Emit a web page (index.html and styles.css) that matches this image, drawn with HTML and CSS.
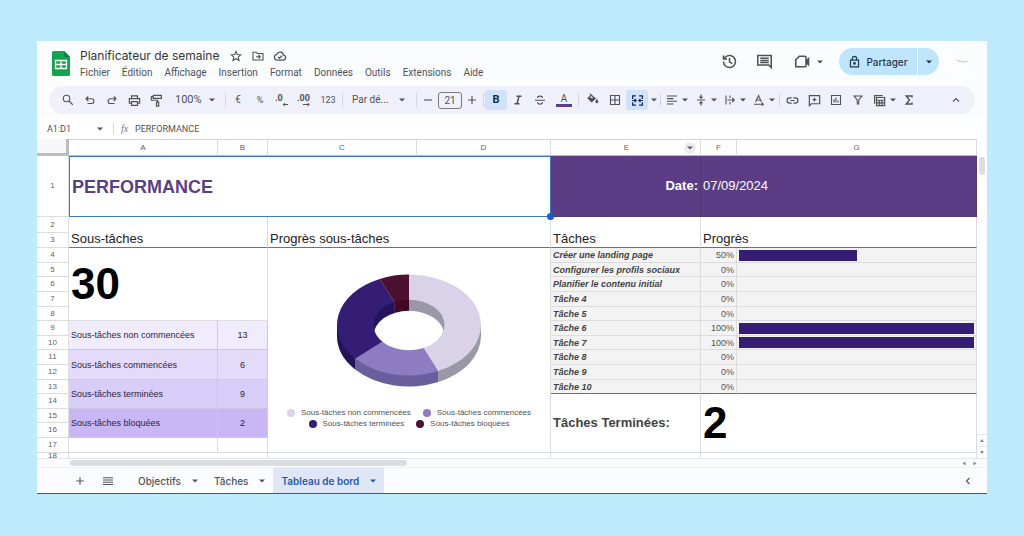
FILE: index.html
```html
<!DOCTYPE html>
<html lang="fr">
<head>
<meta charset="utf-8">
<title>Planificateur de semaine</title>
<link rel="stylesheet" href="styles.css">
</head>
<body>
<svg class="defs" aria-hidden="true">
  <symbol id="caret" viewBox="0 0 6 4"><path d="M0 .5h6L3 3.6z" fill="currentColor"/></symbol>
</svg>
<div class="window">
  <header class="top">
    <svg class="logo" viewBox="0 0 18 25" aria-hidden="true">
      <path d="M1.500 0H12l6 6v17.500a1.500 1.500 0 0 1-1.500 1.500h-15A1.500 1.500 0 0 1 0 23.500v-22A1.500 1.500 0 0 1 1.500 0z" fill="#12a550"/>
      <path d="M12 0l6 6h-4.500A1.500 1.500 0 0 1 12 4.500z" fill="#0a8040"/>
      <path d="M3.500 9.500h11v8h-11zM9 9.500v8M3.500 13.500h11" fill="none" stroke="#fff" stroke-width="1.300"/>
    </svg>
    <div class="doc">
      <div class="doc-title">
        <h1>Planificateur de semaine</h1>
        <button aria-label="Suivre"><svg class="i12" viewBox="0 0 24 24"><path d="M12 3l2.700 6.200 6.800.6-5.100 4.500 1.500 6.600-5.900-3.500-5.900 3.500 1.500-6.600-5.100-4.500 6.800-.6z"/></svg></button>
        <button aria-label="Déplacer"><svg class="i12" viewBox="0 0 24 24"><path d="M2 4.500h7l2 2.500h11v13H2zM8 13.500h8M13 10l3.500 3.500L13 17"/></svg></button>
        <button aria-label="État du document"><svg class="i14" viewBox="0 0 24 24"><path d="M7 19a5 5 0 0 1-.5-9.900A6 6 0 0 1 18 10.500 4.300 4.300 0 0 1 18 19zM8.500 13.500l2.500 2.500 4.500-4.500"/></svg></button>
      </div>
      <nav class="menus">
        <button>Fichier</button><button>Édition</button><button>Affichage</button><button>Insertion</button><button>Format</button><button>Données</button><button>Outils</button><button>Extensions</button><button>Aide</button>
      </nav>
    </div>
    <div class="actions">
      <button aria-label="Historique"><svg class="i17" viewBox="0 0 24 24"><path d="M3.500 12a8.500 8.500 0 1 0 2.800-6.300L3.500 8.300M3.500 3.500v5h5M12 7v5.500l4 2.500"/></svg></button>
      <button aria-label="Commentaires"><svg class="i17" viewBox="0 0 24 24"><path d="M2.500 3.500h19v17l-3.500-3.500H2.500zM6 7.500h12M6 10.500h12M6 13.500h12"/></svg></button>
      <button class="meet" aria-label="Appel"><svg class="i17" viewBox="0 0 24 24"><path d="M7.500 4.500H15a2 2 0 0 1 2 2v11a2 2 0 0 1-2 2H2.500V9.500z"/><path d="M17.500 11l3-3v8.500l-3-3z" fill="currentColor"/></svg><svg class="caret"><use href="#caret"/></svg></button>
      <div class="share">
        <button class="share-main"><svg class="i13" viewBox="0 0 24 24"><path d="M4.500 9.500h15V22h-15zM8 9.500V6.500a4 4 0 0 1 8 0v3"/><circle cx="12" cy="15.500" r="1.500"/></svg>Partager</button>
        <button class="share-more" aria-label="Options de partage"><svg class="caret"><use href="#caret"/></svg></button>
      </div>
      <button class="avatar" aria-label="Compte"><svg class="i13" viewBox="0 0 24 24"><path d="M2 9l5 3 3-1 3 3 4-2h5" /></svg></button>
    </div>
  </header>

  <div class="toolbar" role="toolbar">
    <button aria-label="Rechercher"><svg class="i12" viewBox="0 0 24 24"><circle cx="9" cy="9" r="6.500"/><path d="M14 14l7.500 7.500"/></svg></button>
    <button aria-label="Annuler"><svg class="i12" viewBox="0 0 24 24"><path d="M8.500 5L4 9.500 8.500 14M4.500 9.500H15a4.800 4.800 0 0 1 0 9.600H7"/></svg></button>
    <button aria-label="Rétablir"><svg class="i12" viewBox="0 0 24 24"><path d="M15.500 5L20 9.500 15.500 14M19.500 9.500H9a4.800 4.800 0 0 0 0 9.600h8"/></svg></button>
    <button aria-label="Imprimer"><svg class="i13" viewBox="0 0 24 24"><path d="M6.500 8V3.500h11V8M6.500 17H2.500V8.500h19V17h-4M6.500 14h11v7h-11z"/></svg></button>
    <button aria-label="Reproduire la mise en forme"><svg class="i13" viewBox="0 0 24 24"><path d="M6 2.500h15V8H6zM6 5H2.500v6.500H14V15M12 15h4v7.500h-4z"/></svg></button>
    <label class="pick zoom"><select aria-label="Zoom"><option>100%</option></select><svg class="caret"><use href="#caret"/></svg></label>
    <span class="sep"></span>
    <button aria-label="Format monétaire">€</button>
    <button aria-label="Pourcentage" class="small">%</button>
    <button aria-label="Réduire les décimales" class="dec"><svg class="i14" viewBox="0 0 14 14"><text x="0" y="8">.0</text><path d="M13 11.500H8M10 9.800L8.300 11.500l1.700 1.700" stroke-width="1"/></svg></button>
    <button aria-label="Ajouter des décimales" class="dec"><svg class="i14" viewBox="0 0 14 14"><text x="0" y="8">.00</text><path d="M6 11.500h6M10.500 9.800l1.700 1.700-1.700 1.700" stroke-width="1"/></svg></button>
    <button class="w26 small">123</button>
    <span class="sep"></span>
    <label class="pick font"><select aria-label="Police"><option>Par dé...</option></select><svg class="caret"><use href="#caret"/></svg></label>
    <span class="sep"></span>
    <button class="w20" aria-label="Réduire la taille"><svg class="i12" viewBox="0 0 24 24"><path d="M4 12h16"/></svg></button>
    <input class="size" aria-label="Taille de police" value="21">
    <button class="w20" aria-label="Augmenter la taille"><svg class="i12" viewBox="0 0 24 24"><path d="M4 12h16M12 4v16"/></svg></button>
    <span class="sep"></span>
    <button class="on bold" aria-label="Gras">B</button>
    <button aria-label="Italique"><svg class="i12" viewBox="0 0 24 24"><path d="M9 4.500h10M5 19.500h10M14 4.500l-4 15" stroke-width="3"/></svg></button>
    <button aria-label="Barré"><svg class="i12" viewBox="0 0 24 24"><path d="M2 12.500h20M17 8c-.5-5-10-5-10 0M7 16.500c.5 5 10 5 10 0"/></svg></button>
    <button class="w26" aria-label="Couleur du texte"><span class="text-color">A</span></button>
    <span class="sep"></span>
    <button class="w24 fill" aria-label="Couleur de remplissage"><svg class="i13" viewBox="0 0 24 24"><path d="M7 3l9.500 9-6 6L4 11.500l6-6"/><path d="M5 11.500h11l-5.500 6z" fill="currentColor"/><path d="M20 14.500c3 4 1 5 0 5s-3-1 0-5z" fill="currentColor"/></svg></button>
    <button aria-label="Bordures"><svg class="i12" viewBox="0 0 24 24"><path d="M3 3h18v18H3zM12 3v18M3 12h18"/></svg></button>
    <button class="on" aria-label="Fusionner"><svg class="i13" viewBox="0 0 24 24"><path d="M9 3.500H3V9M3 15v5.500h6M15 3.500h6V9M21 15v5.500h-6M2 12h7M6.500 9l3 3-3 3M22 12h-7M17.500 9l-3 3 3 3"/></svg></button>
    <button class="w11" aria-label="Options de fusion"><svg class="caret"><use href="#caret"/></svg></button>
    <span class="sep"></span>
    <button class="drop" aria-label="Alignement horizontal"><svg class="i12" viewBox="0 0 24 24"><path d="M2 4h20M2 9.300h13M2 14.600h20M2 20h13"/></svg><svg class="caret"><use href="#caret"/></svg></button>
    <button class="drop" aria-label="Alignement vertical"><svg class="i12" viewBox="0 0 24 24"><path d="M4 12h16M12 1v7M9 5.500l3 3 3-3M12 23v-7M9 18.500l3-3 3 3"/></svg><svg class="caret"><use href="#caret"/></svg></button>
    <button class="drop" aria-label="Retour à la ligne"><svg class="i12" viewBox="0 0 24 24"><path d="M4 3v18M12 3v5M12 16v5M7 12h13M16.500 8l4 4-4 4"/></svg><svg class="caret"><use href="#caret"/></svg></button>
    <button class="drop" aria-label="Rotation du texte"><svg class="i12" viewBox="0 0 24 24"><path d="M5 16l6-13 6 13M7.500 12h7M2 20.500h18M17.500 17.500l3 3-3 3"/></svg><svg class="caret"><use href="#caret"/></svg></button>
    <span class="sep"></span>
    <button aria-label="Lien"><svg class="i13" viewBox="0 0 24 24"><path d="M10.500 7H7a5 5 0 0 0 0 10h3.500M13.500 7H17a5 5 0 0 1 0 10h-3.500M8 12h8"/></svg></button>
    <button aria-label="Commentaire"><svg class="i13" viewBox="0 0 24 24"><path d="M2.500 3h19v15H6l-3.500 3.500zM12 7v7M8.500 10.500h7"/></svg></button>
    <button aria-label="Graphique"><svg class="i12" viewBox="0 0 24 24"><path d="M3 3h18v18H3zM8 10v7M12 7v10M16 13v4"/></svg></button>
    <button aria-label="Filtre"><svg class="i12" viewBox="0 0 24 24"><path d="M4 4h16l-6.500 8v8h-3v-8z"/></svg></button>
    <button class="drop" aria-label="Vues filtrées"><svg class="i13" viewBox="0 0 24 24"><path d="M6.500 6.500h15v15h-15zM6.500 11.500h15M6.500 16.500h15M11.500 11.500v10M16.500 11.500v10M3 18V3h15"/></svg><svg class="caret"><use href="#caret"/></svg></button>
    <button aria-label="Fonctions"><svg class="i12" viewBox="0 0 24 24"><path d="M18 7V4H6.500l6.500 8-6.500 8H18v-3" stroke-width="3"/></svg></button>
    <button class="last" aria-label="Masquer les menus"><svg class="i12" viewBox="0 0 24 24"><path d="M6 15l6-6 6 6"/></svg></button>
  </div>

  <div class="formula">
    <input class="name" aria-label="Zone de nom" value="A1:D1">
    <svg class="caret"><use href="#caret"/></svg>
    <span class="fx">fx</span>
    <input class="content" aria-label="Contenu de la cellule" value="PERFORMANCE">
  </div>

  <main class="sheet">
    <div class="grid">
    <table>
      <colgroup><col class="c-n"><col class="c-a"><col class="c-b"><col class="c-c"><col class="c-d"><col class="c-e"><col class="c-f"><col></colgroup>
      <thead><tr><th class="corner"></th><th>A</th><th>B</th><th>C</th><th>D</th><th><div class="sorted"><span>E</span><button aria-label="Menu de la colonne E"><svg class="caret"><use href="#caret"/></svg></button></div></th><th>F</th><th>G</th></tr></thead>
      <tbody>
        <tr class="r-title"><th>1</th><td colspan="4" class="selected">PERFORMANCE<span class="handle"></span></td><td class="banner date">Date:</td><td colspan="2" class="banner">07/09/2024</td></tr>
        <tr class="r-gap"><th>2</th><td colspan="2"></td><td colspan="2"></td><td></td><td colspan="2"></td></tr>
        <tr class="r-head"><th>3</th><td colspan="2">Sous-tâches</td><td colspan="2">Progrès sous-tâches</td><td>Tâches</td><td colspan="2">Progrès</td></tr>
        <tr><th>4</th><td colspan="2" rowspan="5" class="big">30</td>
          <td colspan="2" rowspan="14" class="chart">
            <svg class="donut" viewBox="0 0 144 113" role="img" aria-label="Progrès sous-tâches">
              <clipPath id="hole"><ellipse cx="72" cy="51" rx="35.500" ry="25.300"/></clipPath>
              <path d="M144 51v11A72 50.500 0 0 1 101.300 108V97z" fill="#9a97a6"/>
              <path d="M101.300 97v11.100A72 50.500 0 0 1 18.500 95.800V84.800z" fill="#6a5f9b"/>
              <path d="M18.500 84.800v11A72 50.500 0 0 1 0 62V51z" fill="#25135a"/>
              <path d="M72 .5A72 50.500 0 0 1 101.300 97.100L86.400 74.100 72 51z" fill="#d9d2e9"/>
              <path d="M101.300 97.100A72 50.500 0 0 1 18.500 84.800L72 51z" fill="#8e7cc3"/>
              <path d="M18.500 84.800A72 50.500 0 0 1 42.700 4.900L72 51z" fill="#351c75"/>
              <path d="M42.700 4.900A72 50.500 0 0 1 72 .5V51z" fill="#4c1130"/>
              <g clip-path="url(#hole)">
                <path d="M72 20h40v50H72z" fill="#9a97a6"/>
                <path d="M57.600 20H72v50H57.600z" fill="#420a24"/>
                <path d="M30 20h27.600v50H30z" fill="#25135a"/>
                <ellipse cx="72" cy="62" rx="35.500" ry="25.300" fill="#fff"/>
              </g>
              <path d="M42.700 4.900l14.900 23v11" fill="none" stroke="#6b2a5c" stroke-width=".6"/>
            </svg>
            <ul class="legend">
              <li class="k1">Sous-tâches non commencées</li><li class="k2">Sous-tâches commencées</li>
            </ul>
            <ul class="legend">
              <li class="k3">Sous-tâches terminées</li><li class="k4">Sous-tâches bloquées</li>
            </ul>
          </td>
          <td class="task">Créer une landing page</td><td class="pct">50%</td><td class="track"><div class="bar" style="width:50%"></div></td></tr>
        <tr class="s"><th>5</th><td class="task">Configurer les profils sociaux</td><td class="pct">0%</td><td class="track"></td></tr>
        <tr><th>6</th><td class="task">Planifier le contenu initial</td><td class="pct">0%</td><td class="track"></td></tr>
        <tr><th>7</th><td class="task">Tâche 4</td><td class="pct">0%</td><td class="track"></td></tr>
        <tr class="s"><th>8</th><td class="task">Tâche 5</td><td class="pct">0%</td><td class="track"></td></tr>
        <tr><th>9</th><td rowspan="2" class="sub t1">Sous-tâches non commencées</td><td rowspan="2" class="sub num t1">13</td><td class="task">Tâche 6</td><td class="pct">100%</td><td class="track"><div class="bar" style="width:100%"></div></td></tr>
        <tr class="s"><th>10</th><td class="task">Tâche 7</td><td class="pct">100%</td><td class="track"><div class="bar" style="width:100%"></div></td></tr>
        <tr><th>11</th><td rowspan="2" class="sub t2">Sous-tâches commencées</td><td rowspan="2" class="sub num t2">6</td><td class="task">Tâche 8</td><td class="pct">0%</td><td class="track"></td></tr>
        <tr><th>12</th><td class="task">Tâche 9</td><td class="pct">0%</td><td class="track"></td></tr>
        <tr class="s end"><th>13</th><td rowspan="2" class="sub t3">Sous-tâches terminées</td><td rowspan="2" class="sub num t3">9</td><td class="task">Tâche 10</td><td class="pct">0%</td><td class="track"></td></tr>
        <tr><th>14</th><td rowspan="4" class="total">Tâches Terminées:</td><td colspan="2" rowspan="4" class="big">2</td></tr>
        <tr class="s"><th>15</th><td rowspan="2" class="sub t4">Sous-tâches bloquées</td><td rowspan="2" class="sub num t4">2</td></tr>
        <tr><th>16</th></tr>
        <tr><th>17</th><td></td><td></td></tr>
        <tr class="last-row"><th>18</th><td colspan="2"></td><td colspan="2"></td><td></td><td colspan="2"></td></tr>
      </tbody>
    </table>
    </div>
    <div class="vscroll"><span class="thumb"></span><button aria-label="Haut"><i></i></button><button aria-label="Bas"><i class="down"></i></button></div>
  </main>
  <div class="hscroll"><span class="thumb"></span><button aria-label="Gauche"><i class="left"></i></button><button aria-label="Droite"><i class="right"></i></button></div>

  <footer class="tabs">
    <button class="tool" aria-label="Ajouter une feuille"><svg class="i12" viewBox="0 0 24 24"><path d="M4.500 12h15M12 4.500v15"/></svg></button>
    <button class="tool" aria-label="Toutes les feuilles"><svg class="i12" viewBox="0 0 24 24"><path d="M2 5.500h20M2 10h20M2 14.500h20M2 19h20" stroke-width="2"/></svg></button>
    <button class="tab">Objectifs<svg class="caret"><use href="#caret"/></svg></button>
    <button class="tab">Tâches<svg class="caret"><use href="#caret"/></svg></button>
    <button class="tab active">Tableau de bord<svg class="caret"><use href="#caret"/></svg></button>
    <button class="tool side" aria-label="Afficher le panneau"><svg class="i12" viewBox="0 0 24 24"><path d="M15 6l-6 6 6 6"/></svg></button>
  </footer>
</div>
</body>
</html>
```

FILE: styles.css
```css
* { box-sizing: border-box; }

body {
  margin: 0;
  height: 100vh;
  padding: 41px 37px 42px;
  background: #bdebfb;
  color: #505355;
  font: 10px/14px Roboto, "Liberation Sans", sans-serif;
}

button, input, select {
  margin: 0;
  padding: 0;
  border: 0;
  background: none;
  color: inherit;
  font: inherit;
}

button {
  display: flex;
  align-items: center;
  justify-content: center;
  flex: none;
}

svg {
  flex: none;
  fill: none;
  stroke: currentColor;
  stroke-width: 2.2;
}

.defs { position: absolute; width: 0; height: 0; }
.i12 { width: 12px; height: 12px; }
.i13 { width: 13px; height: 13px; }
.i14 { width: 14px; height: 14px; }
.i17 { width: 17px; height: 17px; }
.caret { width: 6px; height: 4px; stroke: none; }

.window {
  display: flex;
  flex-direction: column;
  height: 100%;
  background: #fbfcfe;
  border-bottom: 1px solid #4b5a63;
}

/* Title bar */
.top {
  display: flex;
  flex: none;
  height: 45px;
  padding: 7px 14px 0 15px;
}
.logo { width: 18px; height: 25px; margin-top: 3px; stroke: none; }
.doc { margin-left: 10px; }
.doc-title { display: flex; align-items: center; height: 16px; }
.doc-title h1 {
  margin: 0 11px 0 0;
  color: #35383a;
  font: 12px/16px Inter, sans-serif;
}
.doc-title button { width: 12px; margin-right: 10px; }
.menus { display: flex; gap: 12px; margin-top: 2px; }
.actions {
  display: flex;
  align-items: center;
  height: 27px;
  margin-left: auto;
}
.actions > button { margin-right: 18px; }
.actions .meet { gap: 6px; margin: 0 16px 0 3px; }
.share { display: flex; height: 27px; color: #1f3850; }
.share-main {
  gap: 5px;
  width: 78px;
  border-radius: 14px 0 0 14px;
  background: #bfe5fd;
  font: 500 10px/14px Inter, sans-serif;
}
.share-more {
  width: 21px;
  margin-left: 1px;
  border-radius: 0 14px 14px 0;
  background: #bfe5fd;
}
.actions > .avatar {
  width: 22px;
  height: 22px;
  margin: 0 0 0 12px;
  background: #fdfdfd;
  color: #c9cccb;
}

/* Toolbar */
.toolbar {
  display: flex;
  align-items: center;
  flex: none;
  height: 28px;
  margin: 0 12px;
  padding: 0 8px;
  border-radius: 14px;
  background: #eff0fa;
}
.toolbar button { width: 22px; height: 20px; }
.toolbar .small { font-size: 9px; }
.toolbar .w11 { width: 11px; }
.toolbar .w20 { width: 20px; }
.toolbar .w24 { width: 24px; }
.toolbar .w26 { width: 26px; }
.toolbar .drop { justify-content: flex-start; gap: 4px; width: 29px; padding-left: 4px; }
.toolbar .last { margin-left: auto; }
.toolbar .on { border-radius: 3px; background: #d0e1fb; color: #10294d; }
.toolbar .bold { font: bold 11px/14px Roboto, sans-serif; }
.dec text { fill: currentColor; stroke: none; font: bold 9px Roboto, sans-serif; }
.sep { flex: none; width: 1px; height: 14px; margin: 0 1px; background: #d3d6e0; }
.pick { display: flex; align-items: center; flex: none; padding-left: 8px; }
.pick select { appearance: none; font-size: 11px; }
.zoom { width: 57px; }
.zoom select { width: 34px; }
.font { width: 71px; }
.font select { width: 47px; font-size: 10px; }
.size {
  width: 24px;
  height: 17px;
  border: 1px solid #777a7d;
  border-radius: 3px;
  text-align: center;
}
.text-color { width: 16px; border-bottom: 3px solid #5b3f86; line-height: 11px; }
.fill svg { margin-bottom: 4px; }

/* Formula bar */
.formula {
  display: flex;
  align-items: center;
  flex: none;
  height: 21px;
  margin-top: 4px;
  padding-left: 10px;
  background: #fff;
  font-size: 9px;
}
.name { width: 50px; }
.fx {
  width: 22px;
  margin-left: 10px;
  padding-left: 7px;
  border-left: 1px solid #d5d8dc;
  color: #777;
  font: italic 10px/12px "Liberation Serif", serif;
}
.content { flex: 1; }

/* Spreadsheet */
.sheet { display: flex; flex: 1; min-height: 0; background: #fff; }
.grid { flex: 1; min-width: 0; overflow: hidden; }
table {
  width: 100%;
  border-spacing: 0;
  table-layout: fixed;
  font: 9px/12px "Liberation Sans", Arial, sans-serif;
}
.c-n { width: 32px; }
.c-a, .c-c { width: 149px; }
.c-b { width: 50px; }
.c-d { width: 134px; }
.c-e { width: 150px; }
.c-f { width: 36px; }
th, td {
  padding: 0 2px;
  border: 0 solid #dadcde;
  border-width: 0 1px 1px 0;
}
th { height: 15px; color: #5c5f61; font-weight: normal; font-size: 8px; }
.s th { height: 14px; }
.last-row th { line-height: 6px; vertical-align: top; }
thead th { height: 17px; border-top: 1px solid #cfd1d3; border-bottom-color: #b9bbbd; }
thead .corner { border: 0 solid #bcbcbc; border-width: 0 3px 3px 0; background: #f6f7f8; }
.sorted { display: flex; align-items: center; justify-content: flex-end; }
.sorted span { margin-right: 55px; }
.sorted button { width: 12px; height: 12px; margin-right: 2px; border-radius: 6px; background: #ececee; }
.r-title th { height: 61px; }
.r-title .selected {
  position: relative;
  border: 1px solid #3c78c8;
  color: #5b3f86;
  font: bold 18px/24px "Liberation Sans", Arial, sans-serif;
}
.handle {
  position: absolute;
  right: -4px;
  bottom: -4px;
  width: 7px;
  height: 7px;
  border-radius: 4px;
  background: #1a5fc8;
}
.banner {
  border-color: #503a70;
  background: #5b3c85;
  color: #fff;
  font: 13px/16px "Liberation Sans", Arial, sans-serif;
}
.date { font-weight: bold; text-align: right; }
.r-gap th { height: 16px; }
.r-gap td { border-bottom: 0; }
.r-head td {
  padding-bottom: 2px;
  border-bottom-color: #707070;
  color: #222;
  font: 13px/12px "Liberation Sans", Arial, sans-serif;
}
.big {
  color: #000;
  font: bold 44px/48px "Liberation Sans", Arial, sans-serif;
}
.task { background: #f3f3f3; color: #434343; font-weight: bold; font-style: italic; }
.pct { background: #f3f3f3; text-align: right; }
.track { background: #f3f3f3; }
.bar { height: 11px; background: #351c75; }
.end .task, .end .pct, .end .track { border-bottom-color: #707070; }
.total { color: #434343; font: bold 13px/16px "Liberation Sans", Arial, sans-serif; }
.sub { border-color: #cfc6e2; color: #2c2440; }
.num { text-align: center; }
.t1 { background: #f1ecfd; }
.t2 { background: #e4dafa; }
.t3 { background: #d8ccf8; }
.t4 { background: #c8b7f4; }

.chart { padding-top: 26px; vertical-align: top; }
.donut { display: block; width: 144px; height: 113px; margin: 0 auto 20px; stroke: none; }
.legend {
  display: flex;
  justify-content: center;
  gap: 12px;
  margin: 0;
  padding: 0;
  list-style: none;
  font: 8px/11px "Liberation Sans", Arial, sans-serif;
}
.legend li { display: flex; align-items: center; gap: 6px; white-space: nowrap; }
.legend li::before { content: ""; width: 8px; height: 8px; border-radius: 4px; background: currentcolor; }
.k1::before { color: #d9d2e9; }
.k2::before { color: #8e7cc3; }
.k3::before { color: #351c75; }
.k4::before { color: #4c1130; }

/* Scrollbars */
.vscroll {
  display: flex;
  flex-direction: column;
  align-items: center;
  flex: none;
  width: 10px;
  padding-top: 18px;
}
.vscroll .thumb { width: 6px; height: 18px; margin-bottom: auto; border-radius: 3px; background: #dadce0; }
.vscroll button { width: 10px; height: 12px; border-top: 1px solid #e6e8ea; }
.hscroll {
  display: flex;
  align-items: center;
  flex: none;
  height: 9px;
  padding: 0 7px 0 33px;
  border-top: 1px solid #e3e5e7;
}
.hscroll .thumb { width: 37%; height: 6px; margin-right: auto; border-radius: 3px; background: #dadce0; }
.hscroll button { width: 11px; height: 8px; }
.vscroll i, .hscroll i {
  border: 2px solid transparent;
  border-bottom: 3px solid #85888b;
  border-top: 0;
}
.down { transform: rotate(180deg); }
.left { transform: rotate(-90deg); }
.right { transform: rotate(90deg); }

/* Sheet tabs */
.tabs {
  display: flex;
  flex: none;
  height: 26px;
  padding: 0 8px 0 29px;
  border-top: 1px solid #edeff1;
  font: 500 10px/14px Inter, sans-serif;
}
.tool { width: 28px; }
.tab { gap: 11px; padding: 0 8px; }
.tool + .tab { margin-left: 8px; }
.active { background: #dfe7f7; color: #2a58ae; font-weight: 600; }
.side { width: 22px; margin-left: auto; }
```
